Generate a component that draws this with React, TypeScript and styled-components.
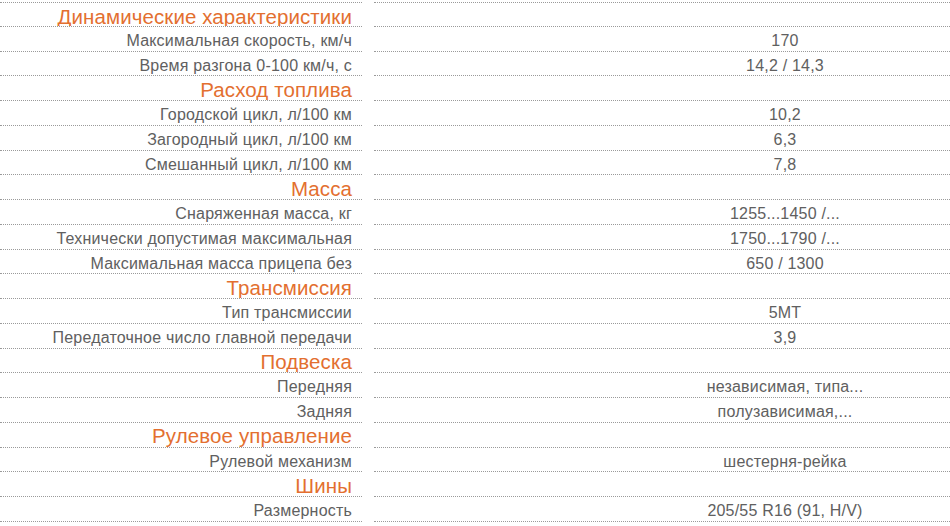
import React from "react";
import styled, { createGlobalStyle } from "styled-components";

const Global = createGlobalStyle`
  html, body { margin: 0; padding: 0; background: #ffffff; }
  body { font-family: "Liberation Sans", Arial, sans-serif; }
`;

const Table = styled.div`
  width: 950px;
  padding-top: 2px;
  overflow: hidden;
`;

const Row = styled.div`
  display: flex;
  gap: 12px;
  height: 24.75px;
  box-sizing: border-box;
`;

const LabelCell = styled.div<{ $first?: boolean; $header?: boolean }>`
  width: 362px;
  flex: none;
  box-sizing: border-box;
  border-bottom: 1px dotted #9a9a9a;
  border-top: ${(p) => (p.$first ? "1px dotted #9a9a9a" : "none")};
  text-align: right;
  padding-right: 10px;
  white-space: nowrap;
  overflow: hidden;
  color: ${(p) => (p.$header ? "#e36f30" : "#606060")};
  font-size: ${(p) => (p.$header ? "20.5px" : "16px")};
  letter-spacing: ${(p) => (p.$header ? "0.1px" : "0.2px")};
  line-height: ${(p) => (p.$header ? "20px" : "20px")};
  padding-top: ${(p) => (p.$header ? "3.5px" : "4px")};
`;

const ValueCell = styled.div<{ $first?: boolean }>`
  flex: 1;
  box-sizing: border-box;
  border-bottom: 1px dotted #9a9a9a;
  border-top: ${(p) => (p.$first ? "1px dotted #9a9a9a" : "none")};
  padding-left: 246px;
  text-align: center;
  color: #606060;
  font-size: 16px;
  letter-spacing: 0.2px;
  line-height: 20px;
  padding-top: 4px;
  white-space: nowrap;
`;

type Item = { label: string; value?: string; header?: boolean };

const data: Item[] = [
  { label: "Динамические характеристики", header: true },
  { label: "Максимальная скорость, км/ч", value: "170" },
  { label: "Время разгона 0-100 км/ч, с", value: "14,2 / 14,3" },
  { label: "Расход топлива", header: true },
  { label: "Городской цикл, л/100 км", value: "10,2" },
  { label: "Загородный цикл, л/100 км", value: "6,3" },
  { label: "Смешанный цикл, л/100 км", value: "7,8" },
  { label: "Масса", header: true },
  { label: "Снаряженная масса, кг", value: "1255...1450 /..." },
  { label: "Технически допустимая максимальная", value: "1750...1790 /..." },
  { label: "Максимальная масса прицепа без", value: "650 / 1300" },
  { label: "Трансмиссия", header: true },
  { label: "Тип трансмиссии", value: "5MT" },
  { label: "Передаточное число главной передачи", value: "3,9" },
  { label: "Подвеска", header: true },
  { label: "Передняя", value: "независимая, типа..." },
  { label: "Задняя", value: "полузависимая,..." },
  { label: "Рулевое управление", header: true },
  { label: "Рулевой механизм", value: "шестерня-рейка" },
  { label: "Шины", header: true },
  { label: "Размерность", value: "205/55 R16 (91, H/V)" },
];

export default function App() {
  return (
    <>
      <Global />
      <Table>
        {data.map((d, i) => (
          <Row key={i}>
            <LabelCell $first={i === 0} $header={d.header}>
              {d.label}
            </LabelCell>
            <ValueCell $first={i === 0}>{d.value ?? ""}</ValueCell>
          </Row>
        ))}
      </Table>
    </>
  );
}
